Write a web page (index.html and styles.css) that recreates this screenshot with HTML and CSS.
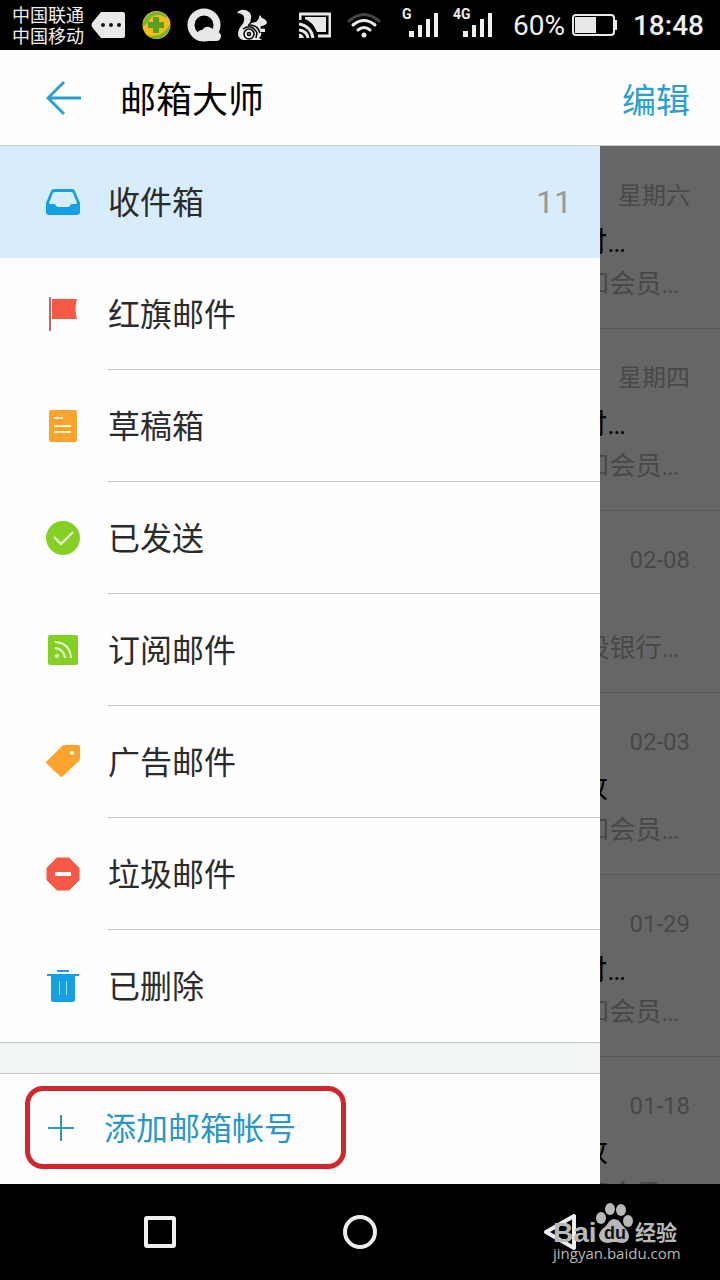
FILE: index.html
```html
<!DOCTYPE html>
<html lang="zh-CN">
<head>
    <meta charset="UTF-8">
    <meta name="viewport" content="width=device-width, initial-scale=1.0">
    <title>邮箱大师</title>
    <link rel="stylesheet" href="styles.css">
</head>
<body>
    <div class="status-bar">
        <div class="carriers">
            <span>中国联通</span>
            <span>中国移动</span>
        </div>
        <div class="status-left">
            <svg width="35" height="34" viewBox="91 8 35 34">
                <path d="M101 12H123Q125 12 125 14V36Q125 38 123 38H101L92 27Q91 25 92 23Z" fill="#e8e8e8"/>
                <circle cx="103" cy="25" r="2" fill="#111"/>
                <circle cx="111" cy="25" r="2" fill="#111"/>
                <circle cx="119" cy="25" r="2" fill="#111"/>
            </svg>
            <svg width="29" height="34" viewBox="142 8 29 34">
                <circle cx="156.500" cy="25" r="14" fill="#f2bd1c"/>
                <path d="M143 26A14 14 0 0 1 168 17Q166 19 163 16Q155 13 150 19Q147 25 143 26Z" fill="#78b52c"/>
                <path d="M170 27A14 14 0 0 1 147 35Q158 38 165 31Q168 28 170 24Z" fill="#78b52c"/>
                <path d="M153 17H159V22H164V28H159V33H153V28H148V22H153Z" fill="#5a9f1e"/>
            </svg>
            <svg width="34" height="34" viewBox="187 8 34 34">
                <circle cx="204" cy="25" r="13" fill="none" stroke="#e8e8e8" stroke-width="7"/>
                <path fill="#e8e8e8" d="M197 34Q198 30 202 30Q205 26 209 27Q213 28 214 31Q219 31 221 35Q221 41 216 41H203Z"/>
            </svg>
            <svg width="30" height="34" viewBox="237 8 30 34">
                <path fill="#e8e8e8" d="M237 13Q240 9 245 10Q252 12 251 18Q251 22 248 25Q253 22 256 22Q258 20 259 18Q259 16 260 15L262 18Q267 20 267 23Q265 26 261 26Q260 28 261 29Q263 28 265 29V32L261 32Q262 36 259 38L262 40H243Q238 38 238 34Q238 29 242 25Q246 20 243 15Q241 13 237 13Z"/>
                <g fill="none" stroke="#000" stroke-width="1.500">
                    <circle cx="249" cy="34" r="5"/>
                    <circle cx="249" cy="34" r="1.500"/>
                    <path d="M243 29Q252 23 257 33L256 38M248 25Q257 24 260 33"/>
                </g>
            </svg>
        </div>
        <div class="status-right">
            <svg width="32" height="34" viewBox="299 8 32 34">
                <path d="M300 20V14H330V36H318" fill="none" stroke="#e8e8e8" stroke-width="3" stroke-linejoin="round"/>
                <path d="M305 17H326V32H317Q313 22 305 19Z" fill="#e8e8e8"/>
                <path d="M299 24Q311 26 313 38M299 30Q307 31 308 38" fill="none" stroke="#e8e8e8" stroke-width="3"/>
                <path d="M299 33.500Q303 34 304 38H299Z" fill="#e8e8e8"/>
            </svg>
            <svg width="34" height="34" viewBox="347 8 34 34">
                <g fill="none" stroke-width="3" stroke="#e8e8e8" stroke-linecap="round">
                    <path d="M349 21Q364 8 379 21" stroke="#444"/>
                    <path d="M353 25Q364 16 375 25"/>
                    <path d="M358 30Q364 25 370 30"/>
                </g>
                <circle cx="364" cy="35" r="2.500" fill="#e8e8e8"/>
            </svg>
            <div class="signals">
                <svg width="46" height="42" viewBox="0 0 46 42">
                    <text class="net-type" x="5" y="15">G</text>
                    <path d="M12 27h5v6h-5zM21 21h4v12h-4zM29 15h4v18h-4zM37 9h4v24h-4z" fill="#eee"/>
                </svg>
                <svg width="46" height="42" viewBox="0 0 46 42">
                    <text class="net-type" x="2" y="15">4G</text>
                    <path d="M12 27h5v6h-5zM21 21h4v12h-4zM29 15h4v18h-4zM37 9h4v24h-4z" fill="#eee"/>
                </svg>
            </div>
            <div class="battery">
                <span>60%</span>
                <svg width="45" height="24" viewBox="0 0 45 24">
                    <rect x="1" y="2" width="41" height="20" rx="3" fill="none" stroke="#e8e8e8" stroke-width="2"/>
                    <rect x="3" y="4" width="21" height="16" fill="#e8e8e8"/>
                    <rect x="42" y="7" width="3" height="10" fill="#e8e8e8"/>
                </svg>
            </div>
            <span class="clock">18:48</span>
        </div>
    </div>

    <header class="header">
        <button class="back" aria-label="返回">
            <svg width="36" height="36" viewBox="0 0 36 36" fill="none" stroke="#2a9fd0" stroke-width="3">
                <path d="M35 18H3M18 2L2 18L18 34"/>
            </svg>
        </button>
        <h1>邮箱大师</h1>
        <button class="edit">编辑</button>
    </header>

    <main class="main">
        <div class="drawer">
            <nav class="folders">
                <a href="#" class="folder active">
                    <svg width="36" height="36" viewBox="0 0 36 36">
                        <path fill="#14a0e4" fill-rule="evenodd" d="M9 5H27Q29 5 30 7L35 19V28Q35 31 32 31H4Q1 31 1 28V19L6 7Q7 5 9 5ZM10 8Q9 8 8 9L4 19Q4 20 6 20H9Q11 20 11 22Q12 23 14 23H22Q24 23 25 22Q25 20 27 20H30Q32 20 32 19L28 9Q27 8 26 8Z"/>
                    </svg>
                    <span class="name">收件箱</span>
                    <span class="count">11</span>
                </a>
                <a href="#" class="folder">
                    <svg width="36" height="36" viewBox="0 0 36 36">
                        <path d="M4 1H6V35H4Z" fill="#c0685e"/>
                        <path d="M7 3H32Q29 13 32 23H7Z" fill="#f65a47"/>
                    </svg>
                    <span class="name">红旗邮件</span>
                </a>
                <a href="#" class="folder">
                    <svg width="36" height="36" viewBox="0 0 36 36">
                        <rect x="4" y="2" width="28" height="32" rx="2" fill="#fba32c"/>
                        <path d="M9 10H18M9 18H26M9 24H26" stroke="#fff3c8" stroke-width="2"/>
                    </svg>
                    <span class="name">草稿箱</span>
                </a>
                <a href="#" class="folder">
                    <svg width="36" height="36" viewBox="0 0 36 36">
                        <circle cx="18" cy="18" r="17" fill="#85d025"/>
                        <path d="M9 17L16 24L28 12" fill="none" stroke="#f4fde0" stroke-width="2"/>
                    </svg>
                    <span class="name">已发送</span>
                </a>
                <a href="#" class="folder">
                    <svg width="36" height="36" viewBox="0 0 36 36">
                        <rect x="3" y="3" width="30" height="30" rx="2" fill="#85d025"/>
                        <circle cx="12" cy="24" r="2" fill="#e9f9cf"/>
                        <path d="M10 16Q19 17 20 26M10 10Q25 11 26 26" fill="none" stroke="#e9f9cf" stroke-width="2"/>
                    </svg>
                    <span class="name">订阅邮件</span>
                </a>
                <a href="#" class="folder">
                    <svg width="36" height="36" viewBox="0 0 36 36">
                        <path fill="#fba32c" d="M20 1H33Q35 1 35 3V14Q35 16 34 17L18 32Q16 34 15 32L2 20Q0 18 2 17L17 2Q18 1 20 1Z"/>
                        <circle cx="27" cy="9" r="2" fill="#fff"/>
                    </svg>
                    <span class="name">广告邮件</span>
                </a>
                <a href="#" class="folder">
                    <svg width="36" height="36" viewBox="0 0 36 36">
                        <path d="M12 2H24L34 12V24L24 34H12L2 24V12Z" fill="#f65a47" stroke="#f65a47" stroke-linejoin="round"/>
                        <rect x="10" y="16" width="16" height="4" fill="#fff"/>
                    </svg>
                    <span class="name">垃圾邮件</span>
                </a>
                <a href="#" class="folder">
                    <svg width="36" height="36" viewBox="0 0 36 36">
                        <path d="M12 2H24V4H12ZM2 6H34V8H2ZM6 8H30V32Q30 34 28 34H8Q6 34 6 32Z" fill="#14a0e4"/>
                        <path d="M14.500 13V27M21.500 13V27" stroke="#a5e2fa" stroke-width="1"/>
                    </svg>
                    <span class="name">已删除</span>
                </a>
            </nav>
            <div class="divider"></div>
            <button class="add-account">
                <svg width="26" height="26" viewBox="0 0 26 26">
                    <path d="M0 13H26M13 0V26" stroke="#2a97c6" stroke-width="2"/>
                </svg>
                <span>添加邮箱帐号</span>
            </button>
        </div>

        <div class="mails">
            <div class="mail">
                <span class="date">星期六</span>
                <span class="subject">付…</span>
                <span class="preview">扣会员…</span>
            </div>
            <div class="mail">
                <span class="date">星期四</span>
                <span class="subject">付…</span>
                <span class="preview">扣会员…</span>
            </div>
            <div class="mail">
                <span class="date">02-08</span>
                <span class="subject"></span>
                <span class="preview">设银行…</span>
            </div>
            <div class="mail">
                <span class="date">02-03</span>
                <span class="subject short">收</span>
                <span class="preview">扣会员…</span>
            </div>
            <div class="mail">
                <span class="date">01-29</span>
                <span class="subject">付…</span>
                <span class="preview">扣会员…</span>
            </div>
            <div class="mail">
                <span class="date">01-18</span>
                <span class="subject short">收</span>
                <span class="preview">扣会员…</span>
            </div>
        </div>
    </main>

    <div class="nav-bar">
        <button aria-label="最近">
            <svg width="36" height="36" viewBox="0 0 36 36" fill="none" stroke="#eee" stroke-width="4">
                <rect x="4" y="4" width="28" height="28" rx="1"/>
            </svg>
        </button>
        <button aria-label="主页">
            <svg width="36" height="36" viewBox="0 0 36 36" fill="none" stroke="#eee" stroke-width="4">
                <circle cx="18" cy="18" r="15"/>
            </svg>
        </button>
        <button aria-label="后退">
            <svg width="36" height="40" viewBox="0 0 36 40" fill="none" stroke="#eee" stroke-width="4" stroke-linejoin="round">
                <path d="M4 20L32 4V36Z"/>
            </svg>
        </button>
        <svg class="watermark" width="132" height="68" viewBox="0 0 132 68">
            <text class="wm-logo" x="3" y="42">Bai</text>
            <ellipse cx="51" cy="18" rx="5" ry="6"/>
            <ellipse cx="60" cy="9" rx="5" ry="6"/>
            <ellipse cx="71" cy="10" rx="5" ry="6"/>
            <ellipse cx="78" cy="21" rx="5" ry="6"/>
            <path d="M64 19Q69 19 72 25Q79 31 79 37Q78 43 71 43Q64 41 58 43Q50 43 49 36Q49 31 56 26Q60 19 64 19Z"/>
            <text class="wm-du" x="54" y="39">du</text>
            <text class="wm-cn" x="85" y="40">经验</text>
            <text class="wm-url" x="3" y="59">jingyan.baidu.com</text>
        </svg>
    </div>
</body>
</html>
```
FILE: styles.css
```css
* {
    box-sizing: border-box;
}

body {
    display: flex;
    flex-direction: column;
    height: 100vh;
    margin: 0;
    background-color: #fefefe;
    color: #2b2b2b;
    font-family: Roboto, "Noto Sans CJK SC", sans-serif;
}

button {
    padding: 0;
    border: none;
    background: none;
    font-family: inherit;
    cursor: pointer;
}

svg {
    display: block;
    flex: none;
}

/* status bar */
.status-bar {
    display: flex;
    flex: none;
    align-items: center;
    height: 50px;
    padding: 0 16px 0 12px;
    background-color: #000;
    color: #f0f0f0;
    white-space: nowrap;
}

.carriers {
    display: flex;
    flex-direction: column;
    margin-right: 7px;
    padding-top: 2px;
    font-size: 18px;
    line-height: 21px;
}

.status-left,
.status-right {
    display: flex;
    align-items: center;
    gap: 16px;
}

.status-right {
    margin-left: auto;
}

.signals {
    display: flex;
    gap: 8px;
}

.net-type {
    fill: #eee;
    font-size: 14px;
    font-weight: bold;
}

.battery {
    display: flex;
    align-items: center;
    gap: 7px;
    font-size: 28px;
}

.clock {
    font-size: 28px;
    font-weight: 500;
}

/* header */
.header {
    display: flex;
    flex: none;
    align-items: center;
    height: 96px;
    padding: 0 30px 0 46px;
    border-bottom: 1px solid #c8cccc;
}

.header h1 {
    margin: 0 auto 0 38px;
    padding-top: 6px;
    color: #000;
    font-size: 36px;
    font-weight: normal;
    line-height: 48px;
}

.edit {
    padding-top: 6px;
    color: #2a9fd0;
    font-size: 34px;
    line-height: 48px;
}

/* drawer */
.main {
    display: flex;
    flex: 1;
    min-height: 0;
    overflow: hidden;
}

.drawer {
    flex: 1;
}

.folder {
    display: flex;
    align-items: center;
    height: 112px;
    padding-left: 45px;
    color: inherit;
    font-size: 32px;
    text-decoration: none;
}

.folder .name {
    display: flex;
    flex: 1;
    align-items: center;
    height: 112px;
    margin-left: 27px;
    padding-bottom: 3px;
    border-bottom: 1px solid #c4c4c4;
}

.folder .count {
    padding-right: 28px;
    color: #999;
}

.folder.active {
    background-color: #d7edfd;
}

.folder.active .name,
.folder:last-child .name {
    border-bottom-color: transparent;
}

.divider {
    height: 32px;
    border-top: 1px solid #c4c8c8;
    border-bottom: 1px solid #c4c8c8;
    background-color: #f1f5f6;
}

.add-account {
    display: flex;
    align-items: center;
    gap: 30px;
    height: 83px;
    margin: 12px 0 0 25px;
    padding: 0 45px 0 18px;
    border: 5px solid #d0272f;
    border-radius: 18px;
    color: #2a97c6;
    font-size: 32px;
}

.add-account span {
    padding-bottom: 3px;
}

/* dimmed mail list */
.mails {
    width: 120px;
    padding-top: 1px;
    overflow: hidden;
    background-color: #666;
}

.mail {
    display: flex;
    flex-direction: column;
    align-items: flex-end;
    height: 182px;
    padding-top: 33px;
    border-bottom: 1px solid #575757;
    color: #484848;
    white-space: nowrap;
}

.mail .date {
    height: 32px;
    margin-right: 30px;
    font-size: 24px;
    line-height: 32px;
}

.mail .subject {
    height: 44px;
    margin-right: 94px;
    color: #000;
    font-size: 28px;
    line-height: 62px;
}

.mail .subject.short {
    margin-right: 112px;
}

.mail .preview {
    margin-right: 41px;
    font-size: 26px;
    line-height: 56px;
}

/* navigation bar */
.nav-bar {
    position: relative;
    display: flex;
    flex: none;
    height: 96px;
    padding: 0 60px;
    background-color: #000;
}

.nav-bar button {
    display: flex;
    flex: 1;
    align-items: center;
    justify-content: center;
}

.watermark {
    position: absolute;
    right: 38px;
    bottom: 12px;
    fill: #b8b8b8;
}

.wm-logo {
    font-family: "Liberation Sans", sans-serif;
    font-size: 28px;
    font-weight: bold;
}

.wm-du {
    fill: #111;
    font-family: "Liberation Sans", sans-serif;
    font-size: 18px;
    font-weight: bold;
}

.wm-cn {
    font-size: 21px;
    font-weight: bold;
}

.wm-url {
    font-family: "Open Sans", sans-serif;
    font-size: 15px;
}
```
